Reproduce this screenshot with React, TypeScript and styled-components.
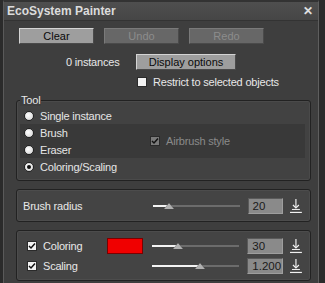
import styled, { createGlobalStyle } from 'styled-components';

const GlobalStyle = createGlobalStyle`
  html, body {
    margin: 0;
    padding: 0;
    background: #2b2b2b;
  }
  body {
    font-family: 'Liberation Sans', Arial, sans-serif;
    font-size: 11px;
    letter-spacing: -0.2px;
    color: #e6e6e6;
  }
`;

const Window = styled.div`
  width: 316px;
  height: 283px;
  margin-left: 3px;
  background: #3e3e3e;
  border-left: 1px solid #5a5a5a;
  border-right: 1px solid #5e5e5e;
  border-top: 2px solid #333;
  box-sizing: border-box;
  overflow: hidden;
`;

const TitleBar = styled.div`
  height: 18px;
  display: flex;
  align-items: center;
  justify-content: space-between;
  padding: 0 5px 0 3px;
  background: linear-gradient(#4f4f4f, #464646);
  border-bottom: 1px solid #333;
`;

const Title = styled.div`
  font-weight: bold;
  font-size: 12px;
  letter-spacing: 0;
  color: #dcdcdc;
`;

const Close = styled.div`
  font-weight: bold;
  font-size: 12px;
  color: #e0e0e0;
`;

const Body = styled.div`
  display: flex;
  flex-direction: column;
  padding: 7px 7px 0 12px;
`;

const ButtonRow = styled.div`
  display: flex;
  gap: 10px;
  padding-left: 3px;
`;

const Button = styled.div<{ $disabled?: boolean; $width: number }>`
  width: ${({ $width }) => $width}px;
  height: 16px;
  box-sizing: border-box;
  display: flex;
  align-items: center;
  justify-content: center;
  font-size: 11px;
  letter-spacing: 0;
  background: ${({ $disabled }) => ($disabled ? '#676767' : '#9e9e9e')};
  color: ${({ $disabled }) => ($disabled ? '#8c8c8c' : '#0a0a0a')};
  border-top: 1px solid ${({ $disabled }) => ($disabled ? '#7a7a7a' : '#d4d4d4')};
  border-left: 1px solid ${({ $disabled }) => ($disabled ? '#7a7a7a' : '#d4d4d4')};
  border-bottom: 1px solid #4a4a4a;
  border-right: 1px solid #4a4a4a;
`;

const InstancesRow = styled.div`
  display: flex;
  align-items: center;
  margin-top: 10px;
  padding-left: 50px;
  gap: 14px;
`;

const Count = styled.span`
  width: 56px;
  color: #e8e8e8;
`;

const CheckRow = styled.label<{ $indent: number; $disabled?: boolean }>`
  display: flex;
  align-items: center;
  gap: 6px;
  padding-left: ${({ $indent }) => $indent}px;
  color: ${({ $disabled }) => ($disabled ? '#8a8a8a' : '#e8e8e8')};
  height: 14px;
`;

const RestrictRow = styled(CheckRow)`
  margin-top: 5px;
`;

const Box = styled.div<{ $checked?: boolean; $disabled?: boolean }>`
  width: 8px;
  height: 8px;
  background: ${({ $disabled }) => ($disabled ? '#7a7a7a' : '#f2f2f2')};
  border: 1px solid #2a2a2a;
  display: flex;
  align-items: center;
  justify-content: center;
`;

const Group = styled.div`
  position: relative;
  margin-top: 11px;
  width: 295px;
  height: 81px;
  box-sizing: border-box;
  border: 1px solid #222;
  border-radius: 3px;
  box-shadow: inset 0 0 0 1px #4a4a4a;
  background: #424242;
  padding: 6px 5px 0 3px;
`;

const Legend = styled.div`
  position: absolute;
  left: 3px;
  top: -7px;
  padding: 0 1px;
  background: #3e3e3e;
  color: #e8e8e8;
  line-height: 12px;
`;

const RadioRow = styled.div`
  height: 17px;
  display: flex;
  align-items: center;
  gap: 6px;
  padding-left: 4px;
`;

const Radio = styled.div<{ $on?: boolean }>`
  width: 8px;
  height: 8px;
  border-radius: 50%;
  background: radial-gradient(circle at 40% 40%, #ffffff, #cfcfcf);
  border: 1px solid #222;
  display: flex;
  align-items: center;
  justify-content: center;
  &::after {
    content: '';
    width: 4px;
    height: 4px;
    border-radius: 50%;
    background: ${({ $on }) => ($on ? '#111' : 'transparent')};
  }
`;

const Band = styled.div`
  display: flex;
  background: #393939;
`;

const BandRadios = styled.div`
  display: flex;
  flex-direction: column;
  width: 130px;
`;

const AirbrushRow = styled(CheckRow)`
  align-self: center;
  height: 17px;
`;

const Panel = styled.div<{ $height: number }>`
  margin-top: 8px;
  width: 295px;
  height: ${({ $height }) => $height}px;
  box-sizing: border-box;
  border: 1px solid #222;
  border-radius: 3px;
  box-shadow: inset 0 0 0 1px #4c4c4c;
  background: #444;
  display: flex;
  flex-direction: column;
  justify-content: center;
  gap: 4px;
  padding: 0 7px 0 6px;
`;

const ParamRow = styled.div`
  display: flex;
  align-items: center;
  height: 16px;
`;

const Label = styled.div`
  width: 131px;
  display: flex;
  align-items: center;
  gap: 6px;
  color: #e8e8e8;
`;

const CheckLabel = styled(Label)`
  width: 81px;
  padding-left: 4px;
`;

const Swatch = styled.div<{ $color?: string }>`
  width: 36px;
  height: 16px;
  box-sizing: border-box;
  margin-right: 9px;
  background: ${({ $color }) => $color ?? 'transparent'};
  border: ${({ $color }) => ($color ? '1px solid #7a0000' : 'none')};
`;

const Track = styled.div`
  position: relative;
  width: 88px;
  height: 2px;
  background: #6c6c6c;
  margin-right: 8px;
`;

const Fill = styled.div`
  position: absolute;
  left: 0;
  top: 0;
  height: 2px;
  background: #f4f4f4;
`;

const Thumb = styled.div`
  position: absolute;
  top: -2px;
  width: 0;
  height: 0;
  margin-left: -5px;
  border-left: 5px solid transparent;
  border-right: 5px solid transparent;
  border-bottom: 6px solid #b0b0b0;
  filter: drop-shadow(0 0 0.5px #111);
`;

const NumBox = styled.div`
  width: 36px;
  height: 16px;
  box-sizing: border-box;
  background: #8a8a8a;
  color: #1a1a1a;
  padding-left: 4px;
  display: flex;
  align-items: center;
  border-top: 1px solid #5a5a5a;
  border-left: 1px solid #5a5a5a;
  border-bottom: 1px solid #9e9e9e;
  border-right: 1px solid #9e9e9e;
  font-size: 11.5px;
  letter-spacing: 0;
`;

const ResetIcon = () => (
  <svg width="14" height="16" viewBox="0 0 14 16" style={{ marginLeft: 6 }}>
    <path d="M7 1 V9" stroke="#f0f0f0" strokeWidth="1.2" />
    <path d="M4 7 L7 10 L10 7" stroke="#f0f0f0" strokeWidth="1.2" fill="none" />
    <path d="M3 11.5 H11" stroke="#f0f0f0" strokeWidth="1" />
    <path d="M1 14.5 H13" stroke="#f0f0f0" strokeWidth="1.2" />
  </svg>
);

const Check = () => (
  <svg width="8" height="8" viewBox="0 0 8 8">
    <path d="M1 4 L3 6 L7 1.5" stroke="#111" strokeWidth="1.5" fill="none" />
  </svg>
);

interface SliderProps {
  value: number;
}

const Slider = ({ value }: SliderProps) => (
  <Track>
    <Fill style={{ width: value }} />
    <Thumb style={{ left: value }} />
  </Track>
);

const App = () => {
  return (
    <>
      <GlobalStyle />
      <Window>
        <TitleBar>
          <Title>EcoSystem Painter</Title>
          <Close>✕</Close>
        </TitleBar>
        <Body>
          <ButtonRow>
            <Button $width={75}>Clear</Button>
            <Button $width={75} $disabled>
              Undo
            </Button>
            <Button $width={75} $disabled>
              Redo
            </Button>
          </ButtonRow>
          <InstancesRow>
            <Count>0 instances</Count>
            <Button $width={100}>Display options</Button>
          </InstancesRow>
          <RestrictRow $indent={121}>
            <Box />
            Restrict to selected objects
          </RestrictRow>
          <Group>
            <Legend>Tool</Legend>
            <RadioRow>
              <Radio />
              Single instance
            </RadioRow>
            <Band>
              <BandRadios>
                <RadioRow>
                  <Radio />
                  Brush
                </RadioRow>
                <RadioRow>
                  <Radio />
                  Eraser
                </RadioRow>
              </BandRadios>
              <AirbrushRow $indent={0} $disabled>
                <Box $disabled>
                  <Check />
                </Box>
                Airbrush style
              </AirbrushRow>
            </Band>
            <RadioRow>
              <Radio $on />
              Coloring/Scaling
            </RadioRow>
          </Group>
          <Panel $height={33}>
            <ParamRow>
              <Label>Brush radius</Label>
              <Slider value={16} />
              <NumBox>20</NumBox>
              <ResetIcon />
            </ParamRow>
          </Panel>
          <Panel $height={51}>
            <ParamRow>
              <CheckLabel>
                <Box>
                  <Check />
                </Box>
                Coloring
              </CheckLabel>
              <Swatch $color="#f00000" />
              <Slider value={26} />
              <NumBox>30</NumBox>
              <ResetIcon />
            </ParamRow>
            <ParamRow>
              <CheckLabel>
                <Box>
                  <Check />
                </Box>
                Scaling
              </CheckLabel>
              <Swatch />
              <Slider value={48} />
              <NumBox>1.200</NumBox>
              <ResetIcon />
            </ParamRow>
          </Panel>
        </Body>
      </Window>
    </>
  );
};

export default App;
